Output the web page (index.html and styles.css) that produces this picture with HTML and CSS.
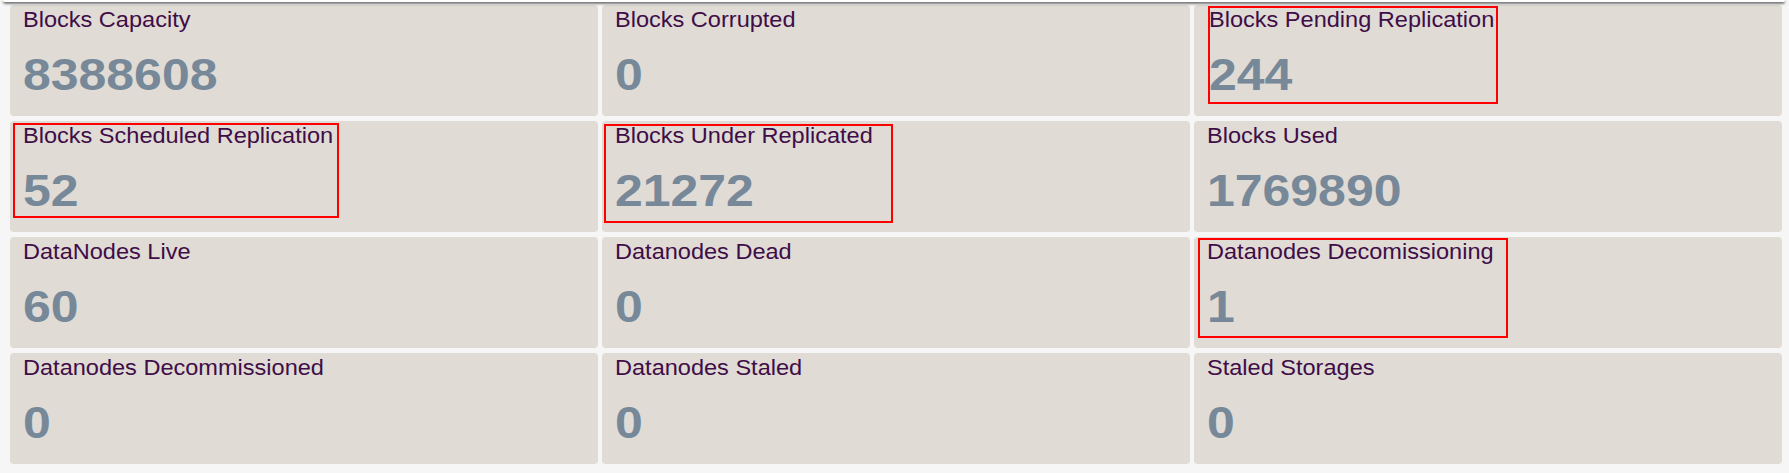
FILE: index.html
```html
<!DOCTYPE html>
<html lang="en">
<head>
<meta charset="utf-8">
<title>Block metrics</title>
<link rel="stylesheet" href="styles.css">
</head>
<body>
<div class="topbar"></div>
<main class="grid">
  <section class="card"><div class="label"><span>Blocks Capacity</span></div><div class="value"><span>8388608</span></div></section>
  <section class="card"><div class="label"><span>Blocks Corrupted</span></div><div class="value"><span>0</span></div></section>
  <section class="card card-shift"><div class="label"><span>Blocks Pending Replication</span></div><div class="value"><span>244</span></div><div class="mark mark-pending"></div></section>

  <section class="card"><div class="label"><span>Blocks Scheduled Replication</span></div><div class="value"><span>52</span></div><div class="mark mark-scheduled"></div></section>
  <section class="card"><div class="label"><span>Blocks Under Replicated</span></div><div class="value"><span>21272</span></div><div class="mark mark-under"></div></section>
  <section class="card"><div class="label"><span>Blocks Used</span></div><div class="value"><span>1769890</span></div></section>

  <section class="card"><div class="label"><span>DataNodes Live</span></div><div class="value"><span>60</span></div></section>
  <section class="card"><div class="label"><span>Datanodes Dead</span></div><div class="value"><span>0</span></div></section>
  <section class="card"><div class="label"><span>Datanodes Decomissioning</span></div><div class="value"><span>1</span></div><div class="mark mark-decom"></div></section>

  <section class="card"><div class="label"><span>Datanodes Decommissioned</span></div><div class="value"><span>0</span></div></section>
  <section class="card"><div class="label"><span>Datanodes Staled</span></div><div class="value"><span>0</span></div></section>
  <section class="card"><div class="label"><span>Staled Storages</span></div><div class="value"><span>0</span></div></section>
</main>
</body>
</html>
```

FILE: styles.css
```css
html, body {
  margin: 0;
  padding: 0;
  background: #f6f6f6;
  height: 473px;
  overflow: hidden;
}

body {
  padding: 0 6.9px 0 9.8px;
  font-family: "Liberation Sans", Arial, sans-serif;
}

.topbar {
  position: relative;
  z-index: 2;
  height: 2px;
  margin: 0 -2.9px 0 -6.8px;
  background: #ffffff;
  border-radius: 0 0 5px 5px;
  box-shadow: 0 1.5px 2.5px rgba(20, 20, 20, 0.85);
}

.grid {
  display: grid;
  grid-template-columns: repeat(3, 1fr);
  grid-auto-rows: 111.5px;
  column-gap: 4.6px;
  row-gap: 4.5px;
  margin-top: 2.7px;
}

.card {
  position: relative;
  background: #e0dbd5;
  border-radius: 4px;
  padding: 2.9px 12.8px 0;
  overflow: hidden;
}

.card-shift {
  padding-left: 14.4px;
}

.label {
  height: 24px;
  line-height: 24px;
  font-size: 22px;
  color: #3f0d47;
  white-space: nowrap;
}

.label span {
  display: inline-block;
  transform: scaleX(1.07);
  transform-origin: 0 50%;
}

.value {
  margin-top: 17.5px;
  height: 52px;
  line-height: 52px;
  font-size: 45px;
  font-weight: bold;
  color: #778899;
  white-space: nowrap;
}

.value span {
  display: inline-block;
  transform: scaleX(1.11);
  transform-origin: 0 50%;
}

.mark {
  position: absolute;
  border: 2px solid #ff0000;
  box-sizing: border-box;
}

.mark-pending {
  left: 13.9px;
  top: 1.3px;
  width: 289.4px;
  height: 98px;
}

.mark-scheduled {
  left: 3.6px;
  top: 2px;
  width: 325.3px;
  height: 95.6px;
}

.mark-under {
  left: 1.9px;
  top: 3.3px;
  width: 288.7px;
  height: 99.3px;
}

.mark-decom {
  left: 3.3px;
  top: 1.3px;
  width: 310px;
  height: 100px;
}
```
